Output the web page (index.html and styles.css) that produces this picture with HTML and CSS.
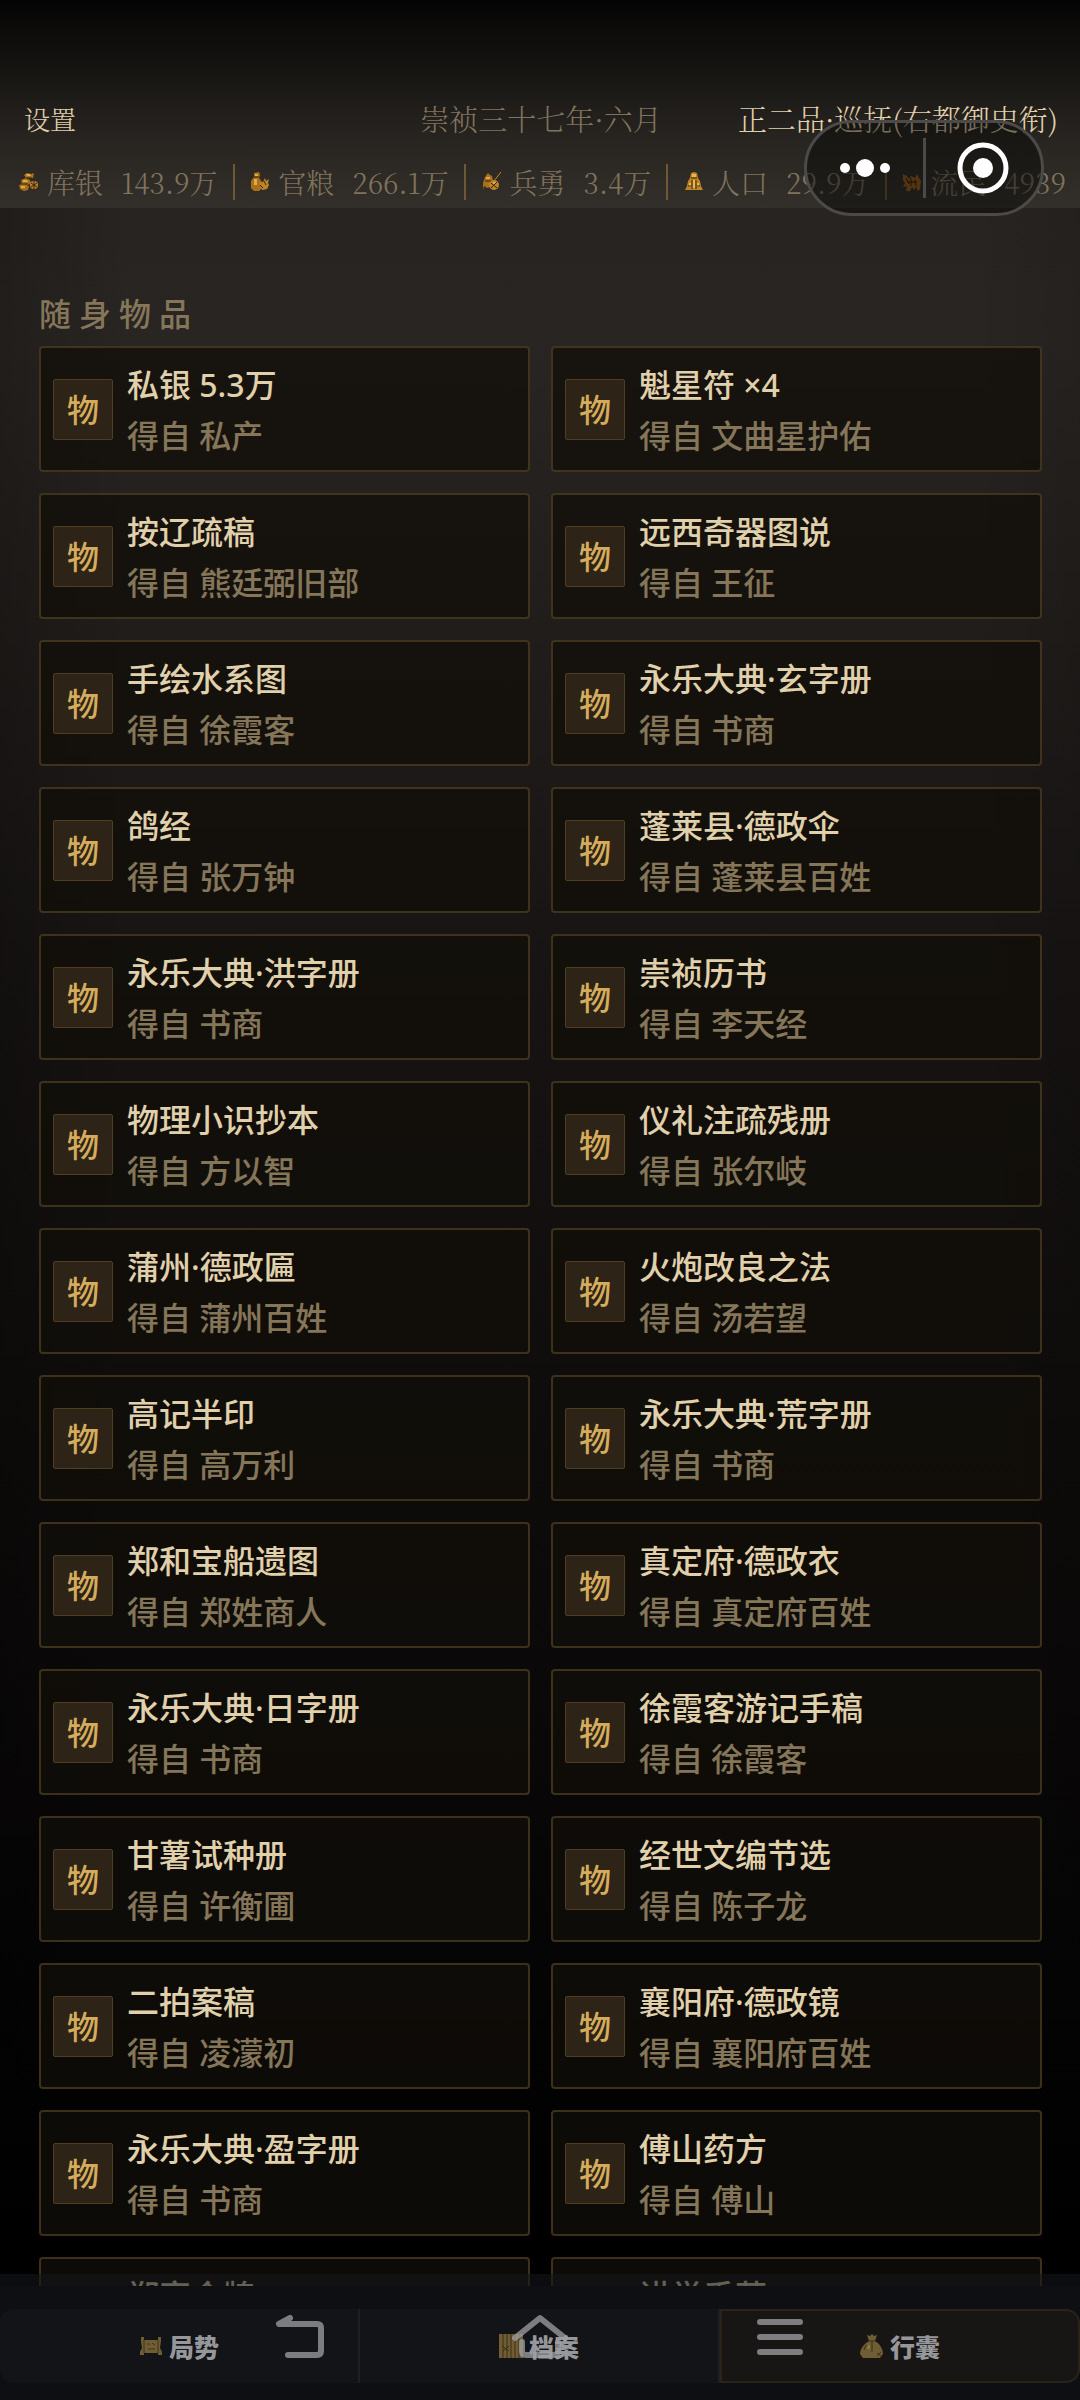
FILE: index.html
```html
<!DOCTYPE html>
<html lang="zh-CN">

<head>
    <meta charset="UTF-8">
    <meta name="viewport" content="width=device-width, initial-scale=1.0">
    <title>行囊</title>
    <link rel="stylesheet" href="styles.css">
</head>

<body>
    <!-- 顶栏 -->
    <header class="header">
        <div class="header-top">
            <button type="button" class="setting">设置</button>
            <span class="date">崇祯三十七年·六月</span>
            <span class="rank">正二品·巡抚(右都御史衔)</span>
        </div>
        <div class="stats">
            <div class="stat">
                <svg class="stat-icon" viewBox="0 0 20 20">
                    <path fill="#a8701c" d="M5 3l3-2 4 1 3-1-1 5H7zM2 8l5-2 4 2 1 3-3 2H3zM0 13l5-1 5 2-1 4-4 1-4-2z" />
                    <path fill="#e0aa48" d="M7 2l4 0 1 2H8zM4 8h4l1 2H4zM2 14h4v2H2z" />
                    <circle cx="15" cy="13" r="4" fill="#c08428" />
                    <path stroke="#3a2408" stroke-width="1" fill="none" d="M12 11l6 4M12 15l6-4M15 9v8M3 12h6M7 6h6" />
                </svg>
                <span class="label">库银</span><span class="value">143.9万</span>
            </div>
            <div class="stat">
                <svg class="stat-icon" viewBox="0 0 20 20">
                    <path fill="#a8701c" d="M4 1l5-1 1 3-1 3 3 4v6l-3 3H4l-3-3V9l3-4z" />
                    <path fill="#e0aa48" d="M5 2h3v2H5zM4 7h3v6H4z" />
                    <path fill="#c08428" d="M9 11l4-1 2-4 1 3 3-2-1 4 1 2-2 4-5 1z" />
                    <path stroke="#3a2408" stroke-width="1" fill="none" d="M4 5h5M10 13l3 3M14 9l2 4" />
                </svg>
                <span class="label">官粮</span><span class="value">266.1万</span>
            </div>
            <div class="stat">
                <svg class="stat-icon" viewBox="0 0 20 20">
                    <path stroke="#c08428" stroke-width="1" d="M12 9l7-9" />
                    <path fill="#a8701c" d="M6 1l2 2 2 1 1 5-3 6-3 1-3-2-1 4 0-7 2-6z" />
                    <circle cx="12" cy="13" r="5" fill="#c08428" />
                    <path fill="#e0aa48" d="M4 5h4v2H4zM11 10h3v2h-3z" />
                    <path stroke="#3a2408" stroke-width="1" fill="none" d="M3 9h6M9 11l6 5M9 16l6-6" />
                </svg>
                <span class="label">兵勇</span><span class="value">3.4万</span>
            </div>
            <div class="stat">
                <svg class="stat-icon" viewBox="0 0 20 20">
                    <path fill="#c08428" d="M7 1l3-1 3 1 1 5 2 3 1 5 2 4H1l2-4 1-5 2-3z" />
                    <path fill="#e8b850" d="M8 2h4v3H8zM9 8h2v8H9zM5 11h2v4H5zM13 11h2v4h-2z" />
                    <path stroke="#3a2408" stroke-width="1" fill="none" d="M7 6h6M8 8v9M12 8v9M4 14h3M13 14h3" />
                </svg>
                <span class="label">人口</span><span class="value">29.9万</span>
            </div>
            <div class="stat">
                <svg class="stat-icon" viewBox="0 0 20 20">
                    <path fill="#9a5f1a" d="M1 2l4 2 2 3 2-3 4 2 2-4 2 4 2 3-1 8-2 2-2-4-2 3-2-3-2 4H4l1-5-4 1 2-4-2-3z" />
                    <path stroke="#2e1a08" stroke-width="1" fill="none" d="M4 6l3 6M9 6v8M13 8l1 6M5 10h10" />
                </svg>
                <span class="label">流民</span><span class="value">4939</span>
            </div>
        </div>
    </header>

    <!-- 小程序胶囊按钮 -->
    <div class="capsule">
        <button type="button" aria-label="更多">
            <svg width="54" height="54" viewBox="0 0 54 54" fill="#fff">
                <circle cx="7" cy="27" r="5" />
                <circle cx="27" cy="27" r="9" />
                <circle cx="47" cy="27" r="5" />
            </svg>
        </button>
        <button type="button" aria-label="关闭">
            <svg width="54" height="54" viewBox="0 0 54 54">
                <circle cx="27" cy="27" r="23" fill="none" stroke="#fff" stroke-width="5" />
                <circle cx="27" cy="27" r="10" fill="#fff" />
            </svg>
        </button>
    </div>

    <!-- 随身物品 -->
    <main class="bag">
        <h2>随身物品</h2>
        <ul class="items">
            <li class="item"><span class="badge">物</span><div class="info"><h3>私银 5.3万</h3><p>得自 私产</p></div></li>
            <li class="item"><span class="badge">物</span><div class="info"><h3>魁星符 ×4</h3><p>得自 文曲星护佑</p></div></li>
            <li class="item"><span class="badge">物</span><div class="info"><h3>按辽疏稿</h3><p>得自 熊廷弼旧部</p></div></li>
            <li class="item"><span class="badge">物</span><div class="info"><h3>远西奇器图说</h3><p>得自 王征</p></div></li>
            <li class="item"><span class="badge">物</span><div class="info"><h3>手绘水系图</h3><p>得自 徐霞客</p></div></li>
            <li class="item"><span class="badge">物</span><div class="info"><h3>永乐大典·玄字册</h3><p>得自 书商</p></div></li>
            <li class="item"><span class="badge">物</span><div class="info"><h3>鸽经</h3><p>得自 张万钟</p></div></li>
            <li class="item"><span class="badge">物</span><div class="info"><h3>蓬莱县·德政伞</h3><p>得自 蓬莱县百姓</p></div></li>
            <li class="item"><span class="badge">物</span><div class="info"><h3>永乐大典·洪字册</h3><p>得自 书商</p></div></li>
            <li class="item"><span class="badge">物</span><div class="info"><h3>崇祯历书</h3><p>得自 李天经</p></div></li>
            <li class="item"><span class="badge">物</span><div class="info"><h3>物理小识抄本</h3><p>得自 方以智</p></div></li>
            <li class="item"><span class="badge">物</span><div class="info"><h3>仪礼注疏残册</h3><p>得自 张尔岐</p></div></li>
            <li class="item"><span class="badge">物</span><div class="info"><h3>蒲州·德政匾</h3><p>得自 蒲州百姓</p></div></li>
            <li class="item"><span class="badge">物</span><div class="info"><h3>火炮改良之法</h3><p>得自 汤若望</p></div></li>
            <li class="item"><span class="badge">物</span><div class="info"><h3>高记半印</h3><p>得自 高万利</p></div></li>
            <li class="item"><span class="badge">物</span><div class="info"><h3>永乐大典·荒字册</h3><p>得自 书商</p></div></li>
            <li class="item"><span class="badge">物</span><div class="info"><h3>郑和宝船遗图</h3><p>得自 郑姓商人</p></div></li>
            <li class="item"><span class="badge">物</span><div class="info"><h3>真定府·德政衣</h3><p>得自 真定府百姓</p></div></li>
            <li class="item"><span class="badge">物</span><div class="info"><h3>永乐大典·日字册</h3><p>得自 书商</p></div></li>
            <li class="item"><span class="badge">物</span><div class="info"><h3>徐霞客游记手稿</h3><p>得自 徐霞客</p></div></li>
            <li class="item"><span class="badge">物</span><div class="info"><h3>甘薯试种册</h3><p>得自 许衡圃</p></div></li>
            <li class="item"><span class="badge">物</span><div class="info"><h3>经世文编节选</h3><p>得自 陈子龙</p></div></li>
            <li class="item"><span class="badge">物</span><div class="info"><h3>二拍案稿</h3><p>得自 凌濛初</p></div></li>
            <li class="item"><span class="badge">物</span><div class="info"><h3>襄阳府·德政镜</h3><p>得自 襄阳府百姓</p></div></li>
            <li class="item"><span class="badge">物</span><div class="info"><h3>永乐大典·盈字册</h3><p>得自 书商</p></div></li>
            <li class="item"><span class="badge">物</span><div class="info"><h3>傅山药方</h3><p>得自 傅山</p></div></li>
            <li class="item"><span class="badge"></span><div class="info"><h3>郑家令牌</h3></div></li>
            <li class="item"><span class="badge"></span><div class="info"><h3>讲学手草</h3></div></li>
        </ul>
    </main>

    <!-- 底部导航 -->
    <nav class="tabs">
        <a href="#" class="tab">
            <svg class="tab-icon" viewBox="0 0 24 24">
                <path fill="#6f5d34" d="M2 3h3v3h14V3h3v4l-1 7 2 4v3h-4v-2H5v2H1v-3l2-4-1-7z" />
                <path stroke="#40351c" stroke-width="1" fill="none" d="M5 6v13M19 6v13M8 10h3M13 9l3 2M9 15h7" />
            </svg>
            <span>局势</span>
        </a>
        <a href="#" class="tab">
            <svg class="tab-icon" viewBox="0 0 24 24">
                <path fill="#6f5d34" d="M0 0h24v24H0z" />
                <path stroke="#3c3018" stroke-width="1" fill="none" d="M4 0v24M8 0v24M12 0v24M16 0v24M20 0v24M3 12l7 5M4 17l6-5" />
            </svg>
            <span>档案</span>
        </a>
        <a href="#" class="tab active">
            <svg class="tab-icon" viewBox="0 0 24 24">
                <path fill="#6f5d34" d="M7 1l3 1 2-2 2 2 3-1-2 6c5 3 8 8 8 13l-3 4H3l-3-4C0 15 4 10 9 7z" />
                <path stroke="#3c3018" stroke-width="1" fill="none" d="M8 7h8M12 7v11M6 11l-2 5M17 19l4 3M21 18l-4 4" />
                <path fill="#8f7a46" d="M8 11h2v4H7z" />
            </svg>
            <span>行囊</span>
        </a>
    </nav>

    <!-- 系统导航键 -->
    <div class="sysbar">
        <button type="button" aria-label="返回">
            <svg width="60" height="60" viewBox="0 0 60 60">
                <path d="M20 9L9 15h38q4 0 4 4v23q0 4-4 4H18" />
            </svg>
        </button>
        <button type="button" aria-label="主页">
            <svg width="60" height="60" viewBox="0 0 60 60">
                <path d="M5 29L30 9l25 20M12 33v9q0 4 4 4h28q4 0 4-4v-9" />
            </svg>
        </button>
        <button type="button" aria-label="任务">
            <svg width="60" height="60" viewBox="0 0 60 60">
                <path d="M10 13h40M10 28h40M10 43h40" />
            </svg>
        </button>
    </div>
</body>

</html>
```
FILE: styles.css
```css
* {
    box-sizing: border-box;
    margin: 0;
    padding: 0;
}

body {
    display: flex;
    flex-direction: column;
    height: 100vh;
    overflow: hidden;
    color: #e0d0ab;
    font-family: "Noto Sans", "Noto Sans CJK SC", sans-serif;
    /* 左右两侧压暗，上亮下黑 */
    background:
        linear-gradient(90deg, rgba(0, 0, 0, 0.2), transparent 12%, transparent 90%, rgba(0, 0, 0, 0.1)),
        linear-gradient(#26221f, #292522 14%, #211d1b 26%, #171413 40%, #0e0c0b 60%, #060505 80%, #000 93%);
}

button {
    border: none;
    background: none;
    color: inherit;
    font: inherit;
    cursor: pointer;
}

a {
    color: inherit;
    text-decoration: none;
}

/* 顶栏 */
.header {
    display: flex;
    flex-direction: column;
    justify-content: flex-end;
    height: 208px;
    padding-bottom: 8px;
    background: linear-gradient(#040404, #1a1815 40%, #292622 70%, #33302b);
    font-family: "Noto Serif CJK SC", "Liberation Serif", "Noto Sans CJK SC", serif;
    font-size: 28px;
    font-weight: 300;
}

.header-top {
    display: grid;
    grid-template-columns: 1fr auto 1fr;
    align-items: center;
    padding: 0 22px 0 24px;
    height: 44px;
    margin-bottom: 24px;
    font-size: 29px;
}

.setting {
    justify-self: start;
    font-size: 26px;
}

.date {
    color: #80735c;
}

.rank {
    justify-self: end;
    white-space: nowrap;
}

/* 资源栏 */
.stats {
    display: flex;
    justify-content: space-between;
    padding: 0 14px 0 19px;
    color: #80735c;
}

.stat {
    display: flex;
    align-items: center;
    height: 36px;
    padding-right: 15px;
    border-right: 2px solid #6e5936;
    line-height: 36px;
    white-space: nowrap;
}

.stat:last-child {
    padding-right: 0;
    border-right: none;
}

.stat-icon {
    width: 20px;
    height: 20px;
    margin-right: 8px;
}

.label {
    margin-right: 18px;
}

/* 胶囊按钮 */
.capsule {
    position: absolute;
    top: 120px;
    right: 36px;
    display: flex;
    align-items: center;
    width: 240px;
    height: 96px;
    border: 3px solid #4b4a48;
    border-radius: 48px;
    background: rgba(10, 9, 7, 0.5);
}

.capsule button {
    flex: 1;
    height: 60px;
}

.capsule button:first-child {
    border-right: 3px solid #4b4a48;
}

.capsule svg {
    display: block;
    margin: 0 auto;
}

/* 随身物品 */
.bag {
    flex: 1;
    min-height: 0;
    padding: 82px 38px 0 39px;
    overflow: hidden;
}

.bag h2 {
    margin-bottom: 8px;
    color: #857659;
    font-size: 32px;
    font-weight: 500;
    line-height: 48px;
    letter-spacing: 8px;
}

.items {
    display: grid;
    grid-template-columns: 1fr 1fr;
    gap: 21px;
    list-style: none;
}

.item {
    display: flex;
    align-items: center;
    gap: 14px;
    height: 126px;
    padding: 1px 12px 0;
    border: 2px solid rgba(107, 86, 48, 0.5);
    border-radius: 4px;
    background: rgba(18, 15, 9, 0.75);
}

.info {
    height: 102px;
}

.item h3,
.item p {
    font-size: 32px;
    font-weight: 500;
    line-height: 51px;
}

.item p {
    color: #857659;
}

/* 物品图标 */
.badge {
    width: 60px;
    height: 61px;
    border: 1px solid #4f3e21;
    border-radius: 2px;
    background: #2d2317;
    color: #d5ac5c;
    font-size: 32px;
    font-weight: 500;
    line-height: 59px;
    text-align: center;
}

/* 底部导航 */
.tabs {
    display: grid;
    grid-template-columns: repeat(3, 1fr);
    padding: 23px 0 17px;
    background: #0d0f13;
}

.tab {
    display: flex;
    align-items: center;
    justify-content: center;
    gap: 6px;
    height: 74px;
    border-right: 2px solid #221e1d;
    background: #121418;
    color: #96979b;
    font-size: 25px;
    font-weight: 800;
}

.tab:first-child {
    border-radius: 14px 0 0 14px;
}

.tab.active {
    border: 2px solid #2b2319;
    border-radius: 0 14px 14px 0;
    background: #181515;
}

.tab-icon {
    width: 24px;
    height: 24px;
}

/* 系统导航键，半透明盖在最上层 */
.sysbar {
    position: absolute;
    right: 0;
    bottom: 0;
    left: 0;
    display: flex;
    justify-content: center;
    gap: 180px;
    height: 126px;
    padding-top: 35px;
    background: linear-gradient(rgba(20, 21, 26, 0.6) 12px, transparent 12px);
}

.sysbar button {
    width: 60px;
    height: 60px;
}

.sysbar svg {
    fill: none;
    stroke: rgba(160, 160, 163, 0.75);
    stroke-width: 6;
    stroke-linecap: round;
    stroke-linejoin: round;
}
```
